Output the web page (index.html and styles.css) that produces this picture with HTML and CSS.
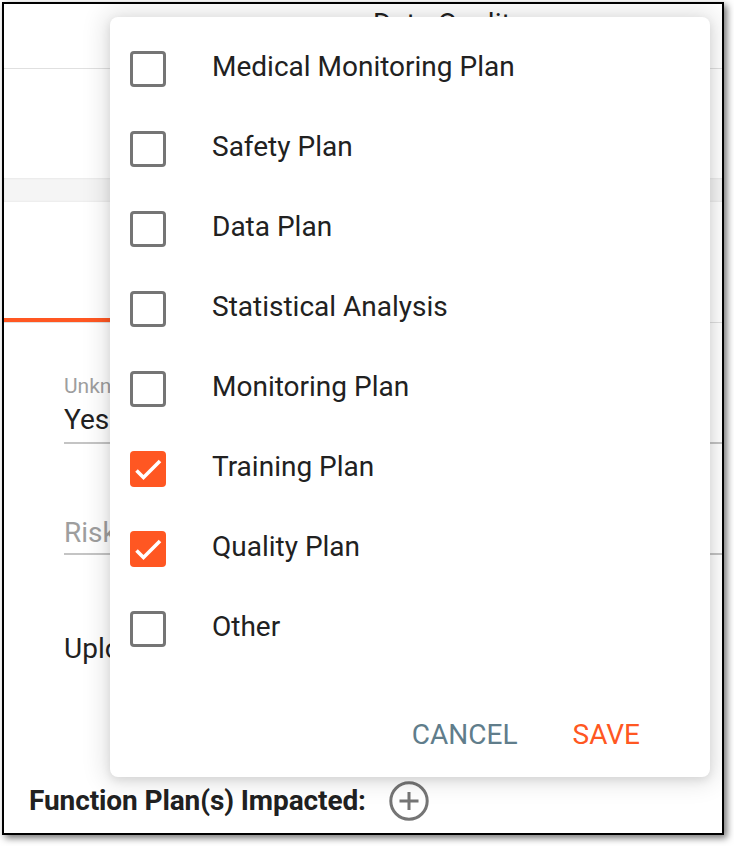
FILE: index.html
```html
<!DOCTYPE html>
<html lang="en">
<head>
<meta charset="utf-8">
<title>Function Plans</title>
<link rel="stylesheet" href="styles.css">
</head>
<body>
<div class="frame">
  <header class="title-bar">
    <h1 class="title">Data Quality</h1>
  </header>
  <section class="summary"></section>
  <div class="band"></div>
  <nav class="tabs">
    <div class="tab-space"></div>
    <div class="tab-track"><div class="tab-indicator"></div></div>
  </nav>
  <form class="form">
    <div class="field field-first">
      <div class="field-label">Unknown</div>
      <div class="field-value">Yes</div>
    </div>
    <div class="field field-second">
      <div class="field-placeholder">Risk</div>
    </div>
    <div class="upload">Upload</div>
  </form>
  <div class="impacted">
    <span class="impacted-label">Function Plan(s) Impacted:</span>
    <svg class="add-icon" width="40" height="40" viewBox="0 0 40 40" aria-hidden="true">
      <circle cx="20" cy="20" r="18.2" fill="none" stroke="#757575" stroke-width="3"/>
      <path d="M10.5 20h19M20 11v18" stroke="#757575" stroke-width="3" fill="none"/>
    </svg>
  </div>

  <div class="dialog" role="dialog">
    <ul class="options">
      <li class="option"><span class="box"></span><span class="option-label">Medical Monitoring Plan</span></li>
      <li class="option"><span class="box"></span><span class="option-label">Safety Plan</span></li>
      <li class="option"><span class="box"></span><span class="option-label">Data Plan</span></li>
      <li class="option"><span class="box"></span><span class="option-label">Statistical Analysis</span></li>
      <li class="option"><span class="box"></span><span class="option-label">Monitoring Plan</span></li>
      <li class="option"><span class="box box-checked"><svg width="36" height="36" viewBox="0 0 36 36"><polyline points="6.5,19.5 13.5,26.5 30,10" fill="none" stroke="#fff" stroke-width="3.6"/></svg></span><span class="option-label">Training Plan</span></li>
      <li class="option"><span class="box box-checked"><svg width="36" height="36" viewBox="0 0 36 36"><polyline points="6.5,19.5 13.5,26.5 30,10" fill="none" stroke="#fff" stroke-width="3.6"/></svg></span><span class="option-label">Quality Plan</span></li>
      <li class="option"><span class="box"></span><span class="option-label">Other</span></li>
    </ul>
    <div class="actions">
      <button type="button" class="btn btn-cancel">CANCEL</button>
      <button type="button" class="btn btn-save">SAVE</button>
    </div>
  </div>
</div>
</body>
</html>
```

FILE: styles.css
```css
* { box-sizing: border-box; }

html, body {
  margin: 0;
  padding: 0;
  background: #ffffff;
}

body {
  font-family: Roboto, "Liberation Sans", Arial, sans-serif;
  color: #212121;
  width: 734px;
  height: 846px;
  overflow: hidden;
}

.frame {
  position: relative;
  margin: 2px 0 0 2px;
  width: 722px;
  height: 833px;
  border: 2px solid #000;
  background: #fff;
  overflow: hidden;
  box-shadow: 3px 3px 7px rgba(0, 0, 0, 0.55);
}

.title-bar {
  height: 65px;
  border-bottom: 1px solid #e0e0e0;
  padding: 4px 0 0 369px;
}

.title {
  margin: 0;
  font-size: 28px;
  line-height: 32px;
  font-weight: 400;
  color: #212121;
}

.summary {
  height: 109px;
}

.band {
  height: 24px;
  background: #f5f5f5;
  box-shadow: inset 0 1px 2px rgba(0, 0, 0, 0.05), inset 0 -1px 2px rgba(0, 0, 0, 0.04);
}

.tabs {
  display: flex;
  flex-direction: column;
}

.tab-space {
  height: 116px;
}

.tab-track {
  height: 5px;
  border-bottom: 1px solid #e0e0e0;
}

.tab-indicator {
  width: 220px;
  height: 4px;
  background: #ff5722;
}

.form {
  margin: 0;
  padding-left: 60px;
  display: flex;
  flex-direction: column;
}

.field {
  border-bottom: 2px solid #c4c4c4;
}

.field-first {
  margin-top: 51px;
  padding-bottom: 6px;
}

.field-label {
  font-size: 21px;
  line-height: 24px;
  color: #9e9e9e;
}

.field-value {
  margin-top: 6px;
  font-size: 28px;
  line-height: 32px;
  color: #212121;
}

.field-second {
  margin-top: 73px;
  padding-bottom: 4px;
}

.field-placeholder {
  font-size: 28px;
  line-height: 32px;
  color: #9e9e9e;
}

.upload {
  margin-top: 78px;
  font-size: 28px;
  line-height: 32px;
  color: #212121;
}

.impacted {
  margin-top: 120px;
  padding-left: 25px;
  display: flex;
  align-items: center;
  gap: 23px;
  height: 32px;
}

.impacted-label {
  font-size: 28px;
  line-height: 32px;
  font-weight: 700;
  letter-spacing: -0.1px;
  color: #212121;
}

.add-icon {
  display: block;
  flex: none;
}

/* Dialog overlay */
.dialog {
  position: absolute;
  left: 106px;
  top: 13px;
  width: 600px;
  height: 760px;
  background: #fff;
  border-radius: 8px;
  padding: 12px 70px 27px 20px;
  box-shadow: 0 3px 10px rgba(0, 0, 0, 0.10), 0 0 24px 6px rgba(0, 0, 0, 0.11);
  display: flex;
  flex-direction: column;
}

.options {
  list-style: none;
  margin: 0;
  padding: 0;
}

.option {
  height: 80px;
  display: flex;
  align-items: center;
  gap: 46px;
}

.box {
  flex: none;
  width: 36px;
  height: 36px;
  border: 3px solid #757575;
  border-radius: 4px;
  display: block;
}

.box-checked {
  border: none;
  background: #ff5722;
}

.box-checked svg {
  display: block;
}

.option-label {
  font-size: 28px;
  line-height: 32px;
  padding-bottom: 5px;
  color: #212121;
}

.actions {
  margin-top: 50px;
  display: flex;
  justify-content: flex-end;
  gap: 55px;
}

.btn {
  margin: 0;
  padding: 0;
  border: none;
  background: none;
  font-family: inherit;
  font-size: 28px;
  line-height: 32px;
  font-weight: 400;
  cursor: pointer;
}

.btn-cancel {
  color: #607d8b;
}

.btn-save {
  color: #ff5722;
}
```
